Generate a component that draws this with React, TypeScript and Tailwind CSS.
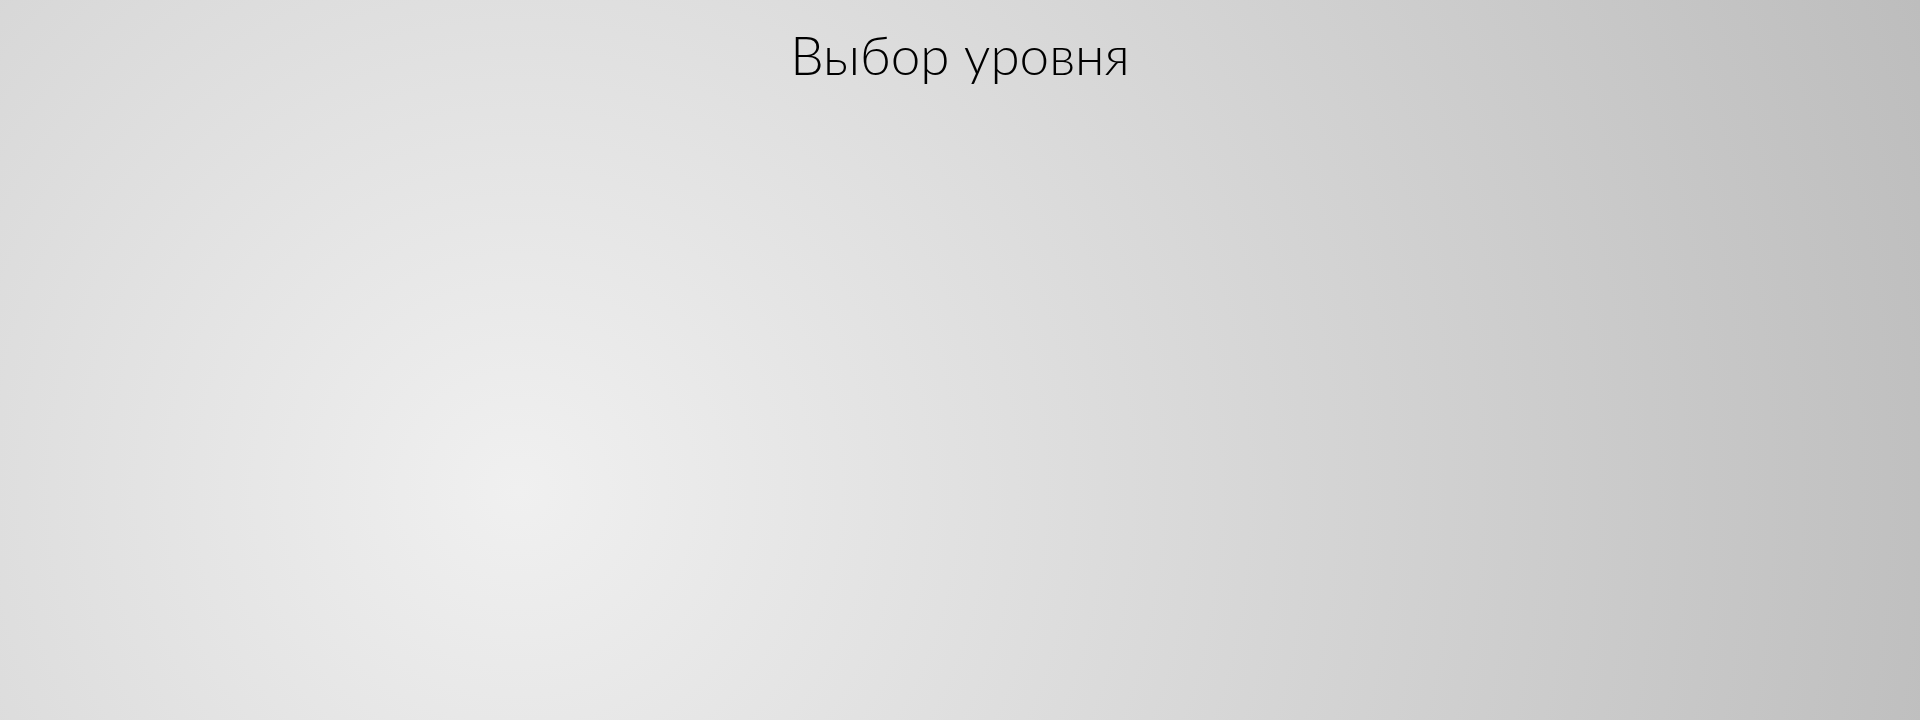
export default function App() {
  return (
    <div className="h-[720px] w-full overflow-hidden bg-[radial-gradient(circle_at_27%_68%,#f0f0f0_0%,#bdbdbd_100%)]">
      <div className="flex justify-center pt-[28px]">
        <h1 className="font-['Lato','Open_Sans',sans-serif] text-[53px] font-light leading-none text-black">
          Выбор уровня
        </h1>
      </div>
    </div>
  );
}
